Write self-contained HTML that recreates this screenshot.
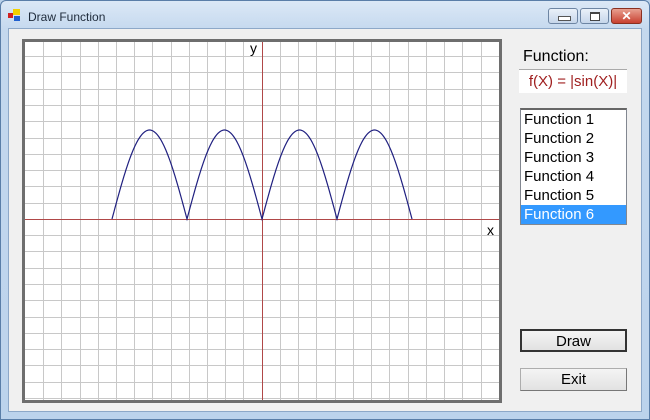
<!DOCTYPE html>
<html><head><style>
body{margin:0;width:650px;height:420px;overflow:hidden;background:#b9d1ea;font-family:"Liberation Sans",sans-serif;}
.win{position:absolute;left:0;top:0;width:648px;height:418px;border:1px solid #5a7ea8;border-radius:6px 6px 0 0;background:linear-gradient(#dbe8f6,#c4d8ee 30px,#bcd3ec);}
.client{position:absolute;left:8px;top:28px;width:634px;height:384px;background:#f0f0f0;border:1px solid #8da8c8;box-sizing:border-box;}
.title{position:absolute;left:28px;top:10px;font-size:12px;color:#1e2a3a;}
.tb{position:absolute;top:8px;height:16px;border:1px solid #6d85a3;border-radius:3px;background:linear-gradient(#eaf1f9,#c6d6ea);box-sizing:border-box;}
.lbl{position:absolute;font-size:15px;color:#000;}
.btn{position:absolute;left:520px;width:107px;height:23px;box-sizing:border-box;background:linear-gradient(#f4f4f4,#e2e2e2);font-size:15px;text-align:center;line-height:21px;}
.list div{height:19px;line-height:19px;padding-left:3px;font-size:15px;}
</style></head><body>
<div class="win"></div>
<svg style="position:absolute;left:8px;top:9px" width="14" height="14"><rect x="0" y="4" width="5" height="5" fill="#d02020"/><rect x="5" y="0" width="7" height="6" fill="#f0d000"/><rect x="6" y="7" width="6" height="5" fill="#2060d0"/></svg>
<div class="title">Draw Function</div>
<div class="tb" style="left:548px;width:30px"><div style="position:absolute;left:9px;top:7px;width:11px;height:3px;border:1px solid #555;background:#fff"></div></div>
<div class="tb" style="left:580px;width:29px"><div style="position:absolute;left:9px;top:3px;width:8px;height:6px;border:1px solid #444;border-top-width:2px;background:#fff"></div></div>
<div class="tb" style="left:611px;width:31px;background:linear-gradient(#e8a090,#c84030);border-color:#8a3020;color:#fff;font-size:12px;font-weight:bold;text-align:center;line-height:14px">✕</div>
<div class="client"></div>
<svg style="position:absolute;left:0;top:0" width="650" height="420">
<rect x="23.5" y="40.5" width="477" height="361" fill="#fff" stroke="#6e6e6e" stroke-width="3"/>
<g stroke="#c8c8c8" stroke-width="1">
<line x1="43.5" y1="42" x2="43.5" y2="400"/><line x1="61.5" y1="42" x2="61.5" y2="400"/><line x1="80.5" y1="42" x2="80.5" y2="400"/><line x1="98.5" y1="42" x2="98.5" y2="400"/><line x1="116.5" y1="42" x2="116.5" y2="400"/><line x1="134.5" y1="42" x2="134.5" y2="400"/><line x1="152.5" y1="42" x2="152.5" y2="400"/><line x1="171.5" y1="42" x2="171.5" y2="400"/><line x1="189.5" y1="42" x2="189.5" y2="400"/><line x1="207.5" y1="42" x2="207.5" y2="400"/><line x1="225.5" y1="42" x2="225.5" y2="400"/><line x1="243.5" y1="42" x2="243.5" y2="400"/>
<line x1="280.5" y1="42" x2="280.5" y2="400"/><line x1="298.5" y1="42" x2="298.5" y2="400"/><line x1="316.5" y1="42" x2="316.5" y2="400"/><line x1="335.5" y1="42" x2="335.5" y2="400"/><line x1="353.5" y1="42" x2="353.5" y2="400"/><line x1="371.5" y1="42" x2="371.5" y2="400"/><line x1="389.5" y1="42" x2="389.5" y2="400"/><line x1="408.5" y1="42" x2="408.5" y2="400"/><line x1="426.5" y1="42" x2="426.5" y2="400"/><line x1="444.5" y1="42" x2="444.5" y2="400"/><line x1="462.5" y1="42" x2="462.5" y2="400"/><line x1="481.5" y1="42" x2="481.5" y2="400"/>
<line x1="25" y1="56.5" x2="499" y2="56.5"/><line x1="25" y1="72.5" x2="499" y2="72.5"/><line x1="25" y1="89.5" x2="499" y2="89.5"/><line x1="25" y1="105.5" x2="499" y2="105.5"/><line x1="25" y1="121.5" x2="499" y2="121.5"/><line x1="25" y1="138.5" x2="499" y2="138.5"/><line x1="25" y1="154.5" x2="499" y2="154.5"/><line x1="25" y1="170.5" x2="499" y2="170.5"/><line x1="25" y1="186.5" x2="499" y2="186.5"/><line x1="25" y1="203.5" x2="499" y2="203.5"/>
<line x1="25" y1="235.5" x2="499" y2="235.5"/><line x1="25" y1="251.5" x2="499" y2="251.5"/><line x1="25" y1="268.5" x2="499" y2="268.5"/><line x1="25" y1="284.5" x2="499" y2="284.5"/><line x1="25" y1="300.5" x2="499" y2="300.5"/><line x1="25" y1="317.5" x2="499" y2="317.5"/><line x1="25" y1="333.5" x2="499" y2="333.5"/><line x1="25" y1="349.5" x2="499" y2="349.5"/><line x1="25" y1="365.5" x2="499" y2="365.5"/><line x1="25" y1="382.5" x2="499" y2="382.5"/><line x1="25" y1="398.5" x2="499" y2="398.5"/>
</g>
<line x1="262.5" y1="42" x2="262.5" y2="400" stroke="#b04848"/>
<line x1="25" y1="219.5" x2="499" y2="219.5" stroke="#b04848"/>
<path id="c" fill="none" stroke="#202080" stroke-width="1.2" d=""/>
<text x="250" y="53" font-size="14" font-family="Liberation Sans" fill="#000">y</text>
<text x="487" y="235" font-size="14" font-family="Liberation Sans" fill="#000">x</text>
</svg>
<script>
var d="";for(var x=112;x<=412;x+=1){var y=219-89*Math.abs(Math.sin(Math.PI*(x-112)/75));d+=(x==112?"M":"L")+x+","+y.toFixed(1);}
document.getElementById("c").setAttribute("d",d);
</script>
<div class="lbl" style="left:523px;top:48px;font-size:16px">Function:</div>
<div style="position:absolute;left:519px;top:69px;width:108px;height:24px;background:#fff;border-top:1px solid #aaa;color:#a02020;font-size:15px;line-height:24px;text-align:center;box-sizing:border-box">f(X) = |sin(X)|</div>
<div class="list" style="position:absolute;left:520px;top:108px;width:107px;height:117px;background:#fff;border:1px solid #828790;border-top:2px solid #666;box-sizing:border-box">
<div>Function 1</div><div>Function 2</div><div>Function 3</div><div>Function 4</div><div>Function 5</div><div style="background:#3399ff;color:#fff">Function 6</div></div>
<div class="btn" style="top:329px;border:2px solid #333;">Draw</div>
<div class="btn" style="top:368px;border:1px solid #adadad;border-right-color:#777;border-bottom-color:#777">Exit</div>
</body></html>
